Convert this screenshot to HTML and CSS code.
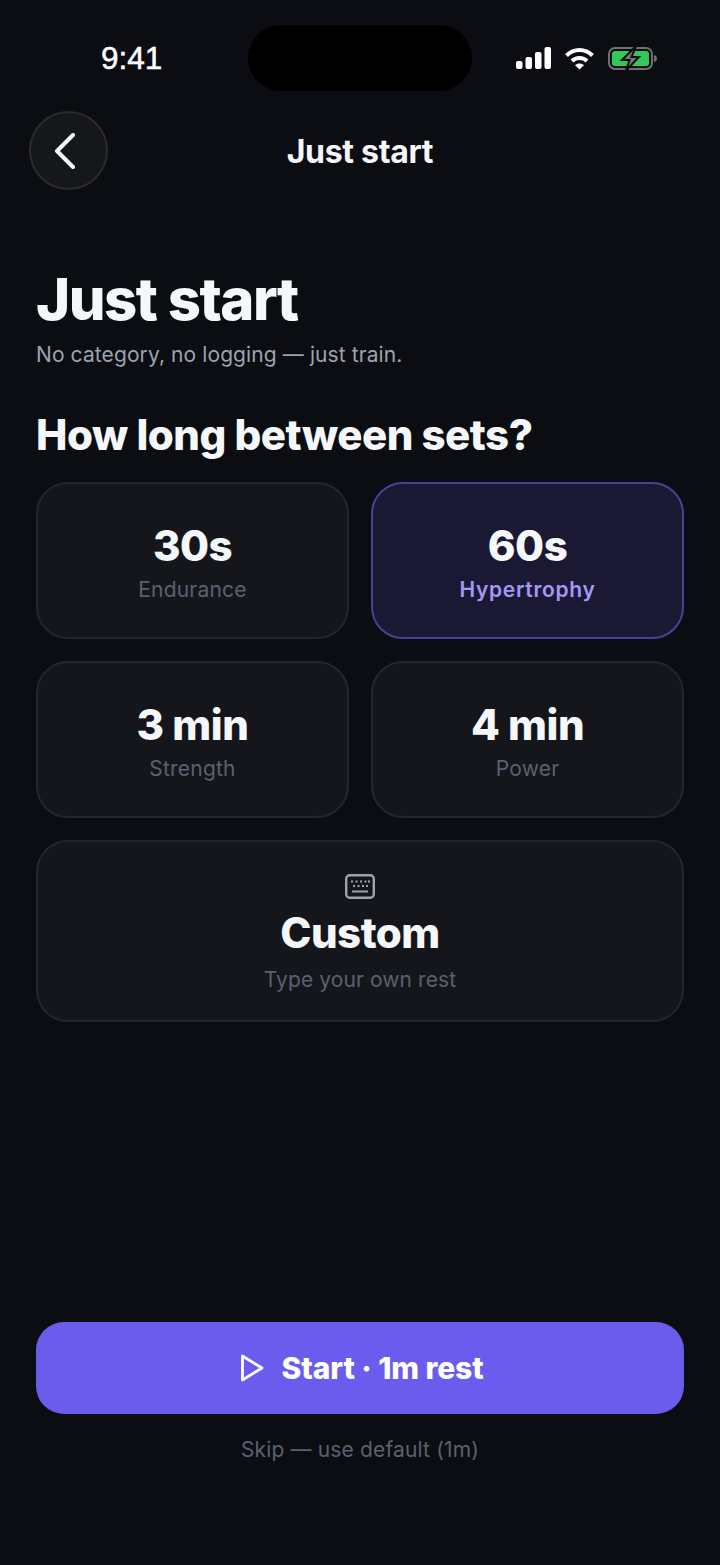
FILE: index.html
```html
<!DOCTYPE html>
<html>
<head>
    <title>Just start</title>
    <link rel="stylesheet" href="styles.css">
</head>
<body>
    <div class="page">
        <div class="status-bar">
            <span class="time">9:41</span>
            <div class="island"></div>
            <div class="status-icons">
                <svg width="36" height="22" viewBox="0 0 36 22" fill="#fff">
                    <rect x="0" y="14" width="6.5" height="8" rx="2"/>
                    <rect x="9.5" y="10" width="6.5" height="12" rx="2"/>
                    <rect x="19" y="5" width="6.5" height="17" rx="2"/>
                    <rect x="28.5" y="0" width="6.5" height="22" rx="2"/>
                </svg>
                <svg width="30" height="23" viewBox="0 0 30 23" fill="none" stroke="#fff" stroke-width="4">
                    <path d="M1.5 8.5C9 1 20 1 27.5 8.5"/>
                    <path d="M7 14C11 10 18 10 22 14"/>
                    <path d="M14.500 22.500L10 18.300C12.500 16 16.500 16 19 18.300Z" fill="#fff" stroke="none"/>
                </svg>
                <svg width="50" height="26" viewBox="0 0 50 26">
                    <rect x="1" y="3" width="43" height="21" rx="6" fill="none" stroke="#6f7073" stroke-width="2"/>
                    <rect x="4" y="6" width="37" height="15" rx="3" fill="#34c759"/>
                    <path d="M46 10c2 .5 3 1.800 3 3.500s-1 3-3 3.500z" fill="#6f7073"/>
                    <path d="M28 1L14 15h7.500L18 25.500 31 12h-7.500z" fill="#77787b" stroke="#0b0d12" stroke-width="2"/>
                </svg>
            </div>
        </div>

        <div class="nav">
            <button class="back-btn">
                <svg width="26" height="36" viewBox="0 0 26 36" fill="none" stroke="#f5f7fb" stroke-width="4" stroke-linecap="round" stroke-linejoin="round">
                    <path d="M20 2L4 18l16 16"/>
                </svg>
            </button>
            <span class="nav-title">Just start</span>
        </div>

        <div class="content">
            <h1>Just start</h1>
            <p class="subtitle">No category, no logging — just train.</p>
            <h2>How long between sets?</h2>

            <div class="rest-grid">
                <div class="rest-card">
                    <span class="rest-value">30s</span>
                    <span class="rest-label">Endurance</span>
                </div>
                <div class="rest-card selected">
                    <span class="rest-value">60s</span>
                    <span class="rest-label">Hypertrophy</span>
                </div>
                <div class="rest-card">
                    <span class="rest-value">3 min</span>
                    <span class="rest-label">Strength</span>
                </div>
                <div class="rest-card">
                    <span class="rest-value">4 min</span>
                    <span class="rest-label">Power</span>
                </div>
                <div class="rest-card custom">
                    <svg width="30" height="25" viewBox="0 0 30 25" fill="none">
                        <rect x="1.200" y="1.200" width="27.600" height="22.600" rx="3.500" stroke="#9da3b0" stroke-width="2.400"/>
                        <g fill="#9da3b0">
                            <rect x="6" y="6.500" width="2" height="2"/>
                            <rect x="10.500" y="6.500" width="2" height="2"/>
                            <rect x="15" y="6.500" width="2" height="2"/>
                            <rect x="19.500" y="6.500" width="2" height="2"/>
                            <rect x="23" y="6.500" width="2" height="2"/>
                            <rect x="8" y="11" width="2" height="2"/>
                            <rect x="12.500" y="11" width="2" height="2"/>
                            <rect x="17" y="11" width="2" height="2"/>
                            <rect x="21" y="11" width="2" height="2"/>
                            <rect x="7" y="16.500" width="16" height="2"/>
                        </g>
                    </svg>
                    <span class="rest-value">Custom</span>
                    <span class="rest-label">Type your own rest</span>
                </div>
            </div>
        </div>

        <div class="footer">
            <button class="start-btn">
                <svg width="24" height="28" viewBox="0 0 24 28" fill="none" stroke="#fff" stroke-width="2.800" stroke-linejoin="round">
                    <path d="M2.500 2L22 14 2.500 26z"/>
                </svg>
                Start · 1m rest
            </button>
            <span class="skip">Skip — use default (1m)</span>
        </div>
    </div>
</body>
</html>
```

FILE: styles.css
```css
body {
    margin: 0;
    background-color: #0b0d12;
    font-family: Inter, "Noto Sans", sans-serif;
    color: #f5f7fb;
}

.page {
    width: 720px;
    height: 1565px;
    display: flex;
    flex-direction: column;
    overflow: hidden;
}

.status-bar {
    position: relative;
    height: 111px;
    box-sizing: border-box;
    padding: 25px 62px 0 101px;
    display: flex;
    justify-content: space-between;
    align-items: flex-start;
}

.time {
    font-family: "Liberation Sans", Arial, sans-serif;
    font-size: 31.5px;
    line-height: 66px;
    color: #fff;
    font-weight: 400;
    -webkit-text-stroke: 0.5px #fff;
}

.island {
    position: absolute;
    left: 248px;
    top: 25px;
    width: 224px;
    height: 66px;
    border-radius: 33px;
    background-color: #000;
}

.status-icons {
    display: flex;
    align-items: center;
    gap: 13px;
    height: 66px;
}

.nav {
    position: relative;
    height: 79px;
    box-sizing: border-box;
    padding-top: 2px;
    display: flex;
    align-items: center;
    justify-content: center;
}

.back-btn {
    position: absolute;
    left: 29px;
    top: 0;
    width: 79px;
    height: 79px;
    box-sizing: border-box;
    border-radius: 50%;
    border: 2px solid #2a2b2f;
    background-color: #16171a;
    display: flex;
    align-items: center;
    justify-content: center;
    padding: 0 6px 0 0;
}

.nav-title {
    font-size: 32px;
    font-weight: 700;
    letter-spacing: -0.3px;
}

.content {
    padding: 0 36px;
}

h1 {
    margin: 76px 0 0;
    font-size: 58px;
    line-height: 66px;
    font-weight: 800;
    letter-spacing: -1.5px;
}

.subtitle {
    margin: 7px 0 0;
    font-size: 21px;
    line-height: 32px;
    letter-spacing: 0.1px;
    color: #9da3b0;
}

h2 {
    margin: 39px 0 0;
    font-size: 42px;
    line-height: 50px;
    font-weight: 800;
    letter-spacing: -0.5px;
}

.rest-grid {
    margin-top: 22px;
    display: grid;
    grid-template-columns: 1fr 1fr;
    gap: 22px;
}

.rest-card {
    height: 157px;
    box-sizing: border-box;
    padding-top: 5px;
    border: 2px solid #24262c;
    border-radius: 32px;
    background-color: #14161b;
    display: flex;
    flex-direction: column;
    align-items: center;
    justify-content: center;
}

.rest-card.selected {
    background-color: #1a1832;
    border-color: #4c4196;
}

.rest-card.custom {
    grid-column: span 2;
    height: 182px;
    padding-top: 6px;
}

.rest-value {
    font-size: 42px;
    line-height: 50px;
    font-weight: 800;
    letter-spacing: -0.5px;
}

.rest-label {
    margin-top: 4px;
    font-size: 21px;
    line-height: 30px;
    letter-spacing: 0.2px;
    color: #5b6170;
}

.selected .rest-label {
    color: #a598f5;
    font-weight: 600;
    letter-spacing: 0.7px;
}

.custom svg {
    margin-bottom: 9px;
}

.custom .rest-label {
    margin-top: 7px;
    letter-spacing: 0.1px;
}

.footer {
    margin-top: auto;
    padding: 0 36px 100px;
    display: flex;
    flex-direction: column;
    align-items: center;
}

.start-btn {
    width: 100%;
    height: 92px;
    padding: 0 0 0 3px;
    border: none;
    border-radius: 28px;
    background-color: #6c5ced;
    color: #fff;
    font-family: inherit;
    font-size: 30px;
    font-weight: 800;
    letter-spacing: -0.1px;
    display: flex;
    align-items: center;
    justify-content: center;
    gap: 18px;
}

.skip {
    margin-top: 21px;
    font-size: 21px;
    line-height: 30px;
    letter-spacing: 0.15px;
    color: #5b6170;
}
```
